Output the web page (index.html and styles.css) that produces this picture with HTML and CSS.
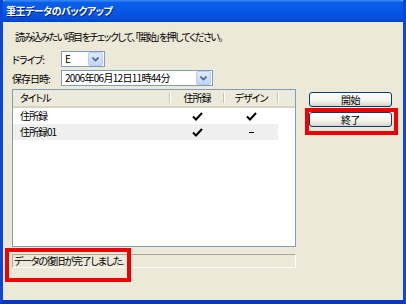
FILE: index.html
```html
<!DOCTYPE html>
<html lang="ja">
<head>
    <meta charset="UTF-8">
    <title>筆王データのバックアップ</title>
    <link rel="stylesheet" href="styles.css">
</head>
<body>
    <div class="window">
        <div class="titlebar">筆王データのバックアップ</div>
        <div class="client">
            <p class="intro">読み込みたい項目をチェックして、「開始」を押してください。</p>

            <div class="field">
                <label>ドライブ:</label>
                <div class="combo drive">
                    <span class="value">E</span>
                    <span class="drop"><svg width="7" height="5" viewBox="0 0 7 5"><path d="M0.5 0.5 L3.5 3.5 L6.5 0.5" fill="none" stroke="#4D6185" stroke-width="1.6"/></svg></span>
                </div>
            </div>
            <div class="field">
                <label>保存日時:</label>
                <div class="combo date">
                    <span class="value">2006年06月12日11時44分</span>
                    <span class="drop"><svg width="7" height="5" viewBox="0 0 7 5"><path d="M0.5 0.5 L3.5 3.5 L6.5 0.5" fill="none" stroke="#4D6185" stroke-width="1.6"/></svg></span>
                </div>
            </div>

            <div class="main">
                <div class="list">
                    <div class="list-head">
                        <div class="col col-title">タイトル</div>
                        <div class="col col-check">住所録</div>
                        <div class="col col-check">デザイン</div>
                    </div>
                    <div class="row">
                        <div class="cell">住所録</div>
                        <div class="cell mark"><svg width="11" height="9" viewBox="0 0 11 9"><path d="M1 4.5 L4 7.5 L10 1" fill="none" stroke="#000" stroke-width="2"/></svg></div>
                        <div class="cell mark"><svg width="11" height="9" viewBox="0 0 11 9"><path d="M1 4.5 L4 7.5 L10 1" fill="none" stroke="#000" stroke-width="2"/></svg></div>
                    </div>
                    <div class="row alt">
                        <div class="cell">住所録01</div>
                        <div class="cell mark"><svg width="11" height="9" viewBox="0 0 11 9"><path d="M1 4.5 L4 7.5 L10 1" fill="none" stroke="#000" stroke-width="2"/></svg></div>
                        <div class="cell mark"><span class="dash"></span></div>
                    </div>
                </div>
                <div class="buttons">
                    <button class="btn">開始</button>
                    <button class="btn">終了</button>
                </div>
            </div>

            <div class="status">データの復旧が完了しました.</div>
        </div>

        <div class="mark-box mark-end"></div>
        <div class="mark-box mark-status"></div>
    </div>
</body>
</html>
```

FILE: styles.css
```css
body {
    margin: 0;
    font-family: "Noto Sans CJK JP", "Noto Sans", sans-serif;
    font-size: 10px;
    font-feature-settings: "palt";
    letter-spacing: -1px;
    color: #000;
    background: #ECE9D8;
}

.window {
    position: relative;
    width: 406px;
    height: 304px;
    box-sizing: border-box;
    display: flex;
    flex-direction: column;
    border-left: 3px solid #0A46D8;
    border-right: 3px solid #0A46D8;
    border-bottom: 4px solid #0837C4;
    background: #ECE9D8;
    overflow: hidden;
}

.titlebar {
    height: 22px;
    margin: 0 -3px;
    padding-left: 6px;
    line-height: 21px;
    font-size: 10px;
    font-weight: bold;
    letter-spacing: -0.5px;
    color: #fff;
    text-shadow: 1px 1px 0 #0A1E80;
    border-radius: 6px 6px 0 0;
    background: linear-gradient(#3D8CF7 0%, #0A5FE8 12%, #0558E6 50%, #0451DB 80%, #0343C8 100%);
}

.client {
    flex: 1;
    padding: 9px 0 0 9px;
}

.intro {
    margin: 0 0 8px 3px;
    line-height: 12px;
    letter-spacing: -1.5px;
}

.field {
    display: flex;
    align-items: center;
    height: 16px;
    margin-bottom: 3px;
}

.field label {
    width: 49px;
}

.combo {
    height: 16px;
    box-sizing: border-box;
    display: flex;
    align-items: center;
    border: 1px solid #7F9DB9;
    background: #fff;
}

.combo .value {
    flex: 1;
    padding-left: 3px;
    line-height: 14px;
}

.drive {
    width: 44px;
}

.date {
    width: 152px;
}

.date .value {
    letter-spacing: -0.7px;
}

.drop {
    width: 13px;
    height: 12px;
    margin-right: 1px;
    display: flex;
    align-items: center;
    justify-content: center;
    border: 1px solid #B9CCF5;
    border-radius: 2px;
    background: linear-gradient(#E0E9FE, #C3D4FA);
}

.main {
    display: flex;
}

.list {
    width: 284px;
    height: 158px;
    box-sizing: border-box;
    border: 1px solid #7F9DB9;
    background: #fff;
}

.list-head {
    display: flex;
    height: 18px;
    box-sizing: border-box;
    background: #EBEADB;
    border-bottom: 2px solid #D6D3C4;
}

.col {
    position: relative;
    line-height: 16px;
    box-sizing: border-box;
}

.col::after {
    content: "";
    position: absolute;
    right: 0;
    top: 3px;
    bottom: 3px;
    width: 1px;
    background: #C7C5B2;
    box-shadow: 1px 0 0 #fff;
}

.col-title {
    width: 157px;
    padding-left: 7px;
}

.col-check {
    width: 54px;
    text-align: center;
}

.row {
    display: flex;
    width: 265px;
    height: 16px;
    line-height: 16px;
}

.row.alt {
    background: #EFEFEF;
}

.cell {
    width: 54px;
    display: flex;
    align-items: center;
    justify-content: center;
}

.cell:first-child {
    width: 157px;
    justify-content: flex-start;
    padding-left: 7px;
    box-sizing: border-box;
}

.dash {
    width: 5px;
    height: 1px;
    background: #000;
}

.buttons {
    display: flex;
    flex-direction: column;
    gap: 5px;
    margin-left: 13px;
    padding-top: 3px;
}

.btn {
    width: 83px;
    height: 15px;
    padding: 0;
    font-family: inherit;
    font-size: 10px;
    font-feature-settings: "palt";
    letter-spacing: -0.5px;
    line-height: 13px;
    color: #000;
    border: 1px solid #003C74;
    border-radius: 3px;
    background: linear-gradient(#FFFFFF 0%, #F4F3EE 60%, #D8D4C8 100%);
}

.status {
    width: 284px;
    height: 14px;
    margin-top: 7px;
    box-sizing: border-box;
    padding-left: 1px;
    line-height: 12px;
    letter-spacing: -1.2px;
    border-top: 1px solid #ACA899;
    border-left: 1px solid #ACA899;
    border-right: 1px solid #fff;
    border-bottom: 1px solid #fff;
}

.mark-box {
    position: absolute;
    border: 4px solid #F00000;
    box-sizing: border-box;
}

.mark-end {
    left: 302px;
    top: 108px;
    width: 93px;
    height: 27px;
}

.mark-status {
    left: 2px;
    top: 248px;
    width: 126px;
    height: 34px;
}
```
